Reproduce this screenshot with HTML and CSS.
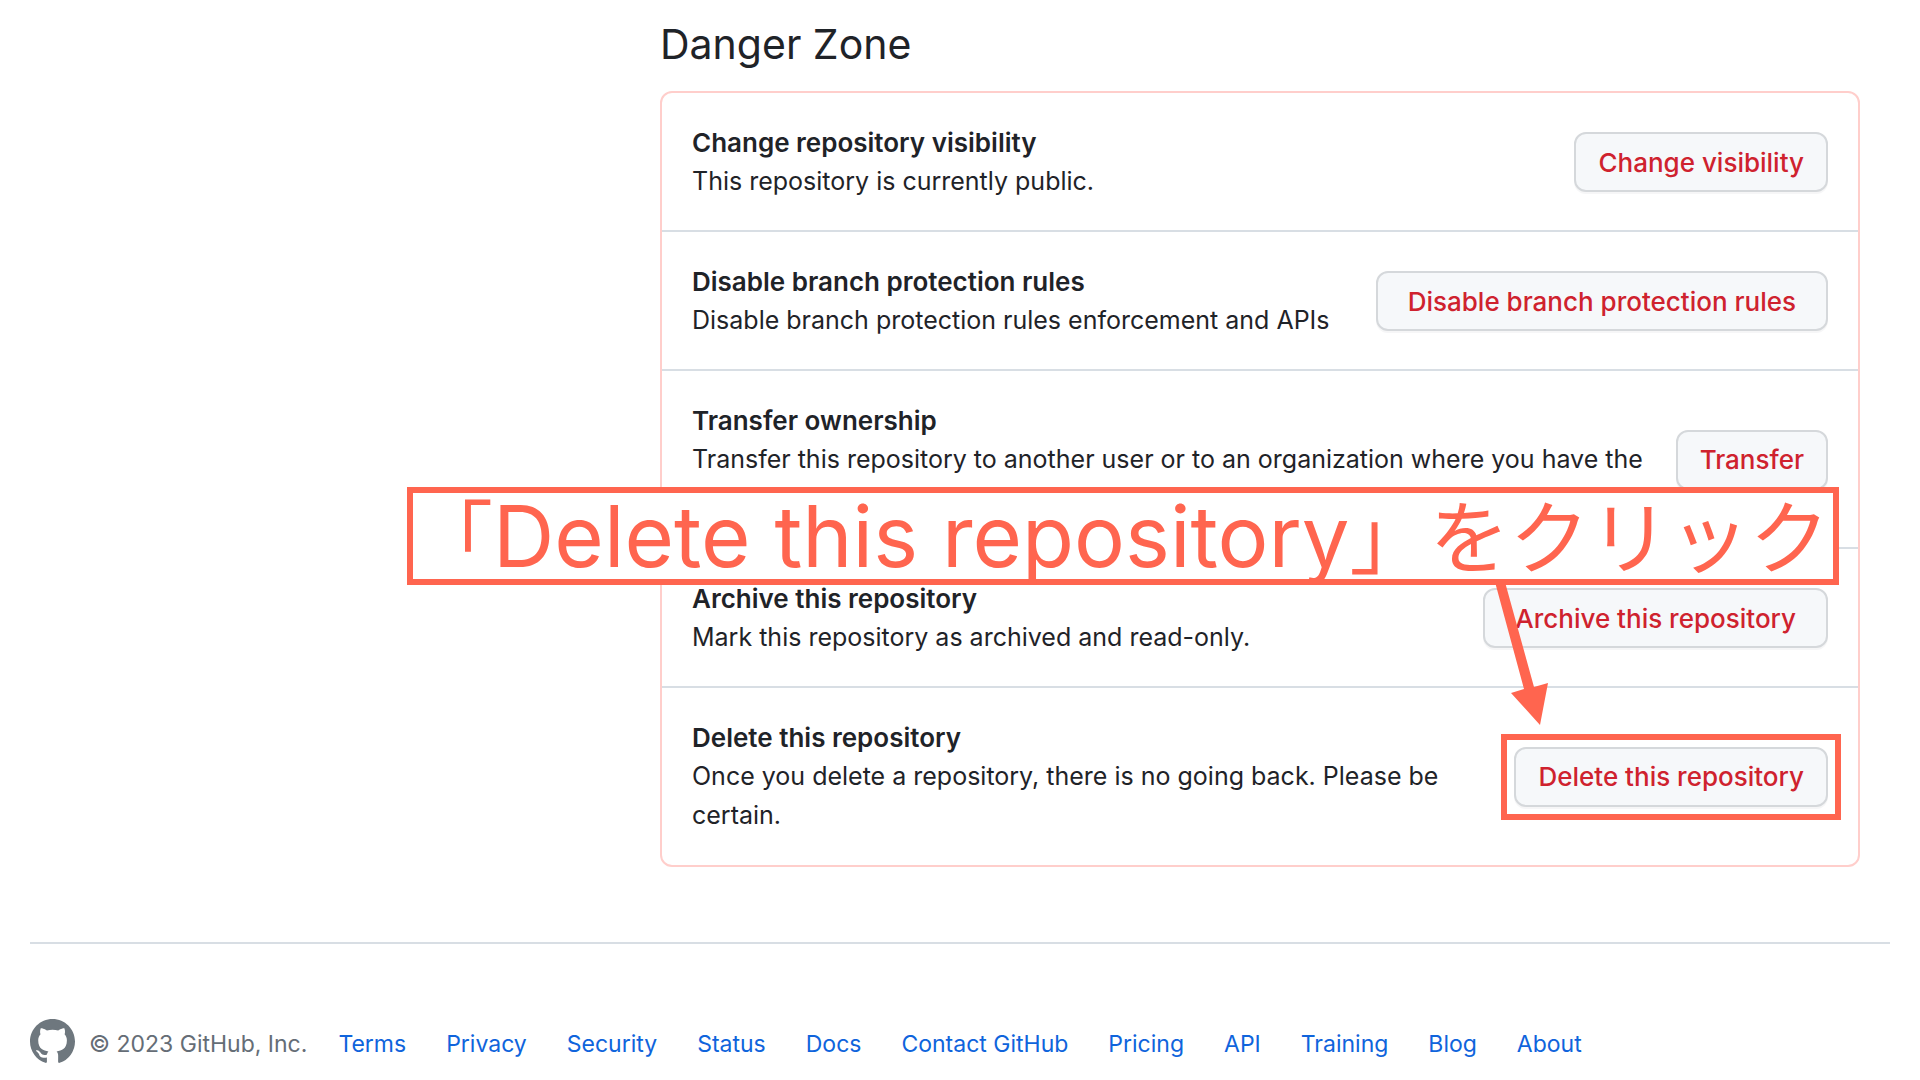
FILE: index.html
```html
<!DOCTYPE html>
<html lang="en">
<head>
<meta charset="utf-8">
<title>Danger Zone</title>
<link rel="stylesheet" href="styles.css">
</head>
<body>
<main class="settings">
  <h2 class="settings-title">Danger Zone</h2>
  <div class="danger-box">
    <ul class="danger-list">
      <li class="danger-row">
        <div class="danger-text">
          <strong>Change repository visibility</strong>
          <p>This repository is currently public.</p>
        </div>
        <button class="btn" type="button">Change visibility</button>
      </li>
      <li class="danger-row">
        <div class="danger-text">
          <strong>Disable branch protection rules</strong>
          <p>Disable branch protection rules enforcement and APIs</p>
        </div>
        <button class="btn btn-wide" type="button">Disable branch protection rules</button>
      </li>
      <li class="danger-row">
        <div class="danger-text">
          <strong>Transfer ownership</strong>
          <p>Transfer this repository to another user or to an organization where you have the ability to create repositories.</p>
        </div>
        <button class="btn" type="button">Transfer</button>
      </li>
      <li class="danger-row">
        <div class="danger-text">
          <strong>Archive this repository</strong>
          <p>Mark this repository as archived and read-only.</p>
        </div>
        <button class="btn btn-wide" type="button">Archive this repository</button>
      </li>
      <li class="danger-row danger-row-spaced">
        <div class="danger-text">
          <strong>Delete this repository</strong>
          <p>Once you delete a repository, there is no going back. Please be certain.</p>
        </div>
        <div class="highlight"><button class="btn" type="button">Delete this repository</button></div>
      </li>
    </ul>
    <svg class="arrow" viewBox="0 0 54 144" aria-hidden="true"><path d="M0 0L10 0L39 105L53 101L45 143L16 111L29 107Z"/></svg>
    <div class="callout" lang="ja">「<span class="callout-latin">Delete this repository</span>」をクリック</div>
  </div>
</main>
<footer class="footer">
  <svg class="mark" viewBox="0 0 16 16" aria-hidden="true"><path d="M8 0C3.58 0 0 3.58 0 8c0 3.54 2.29 6.53 5.47 7.59.4.07.55-.17.55-.38 0-.19-.01-.82-.01-1.49-2.01.37-2.53-.49-2.69-.94-.09-.23-.48-.94-.82-1.13-.28-.15-.68-.52-.01-.53.63-.01 1.08.58 1.23.82.72 1.21 1.87.87 2.33.66.07-.52.28-.87.51-1.07-1.78-.2-3.64-.89-3.64-3.95 0-.87.31-1.59.82-2.15-.08-.2-.36-1.02.08-2.12 0 0 .67-.21 2.2.82.64-.18 1.32-.27 2-.27.68 0 1.36.09 2 .27 1.53-1.04 2.2-.82 2.2-.82.44 1.1.16 1.92.08 2.12.51.56.82 1.27.82 2.15 0 3.07-1.87 3.75-3.65 3.95.29.25.54.73.54 1.48 0 1.07-.01 1.93-.01 2.2 0 .21.15.46.55.38A8.013 8.013 0 0016 8c0-4.42-3.58-8-8-8z"/></svg>
  <span class="copyright">© 2023 GitHub, Inc.</span>
  <nav class="footer-links">
    <a href="#">Terms</a>
    <a href="#">Privacy</a>
    <a href="#">Security</a>
    <a href="#">Status</a>
    <a href="#">Docs</a>
    <a href="#">Contact GitHub</a>
    <a href="#">Pricing</a>
    <a href="#">API</a>
    <a href="#">Training</a>
    <a href="#">Blog</a>
    <a href="#">About</a>
  </nav>
</footer>
</body>
</html>
```
FILE: styles.css
```css
* { box-sizing: border-box; }

body {
  margin: 0;
  background: #fff;
  color: #1f2328;
  font: 26px/39px Inter, "Liberation Sans", sans-serif;
}

.settings { padding: 14px 60px 0 660px; }

.settings-title {
  margin: 0 0 17px;
  font-size: 41px;
  font-weight: 400;
  line-height: 60px;
}

.danger-box {
  position: relative;
  border: 2px solid #ffcecb;
  border-radius: 12px;
}

.danger-list { margin: 0; padding: 0; list-style: none; }

.danger-row {
  display: flex;
  align-items: center;
  justify-content: space-between;
  gap: 12px;
  padding: 30px 30px 29px;
}

.danger-row + .danger-row { border-top: 2px solid #d8dee4; }
.danger-row-spaced { gap: 40px; padding-bottom: 30px; }
.danger-text strong { font-weight: 600; }
.danger-text p { margin: 0; font-size: 25px; }

.btn {
  flex: none;
  height: 60px;
  padding: 0 22px;
  border: 2px solid #d5d8db;
  border-radius: 12px;
  background: #f6f8fa;
  box-shadow: 0 2px 0 rgba(31, 35, 40, 0.04);
  color: #cf222e;
  font: 500 26px/39px Inter, "Liberation Sans", sans-serif;
  white-space: nowrap;
}

.btn-wide { padding: 0 30px; }

.highlight { position: relative; display: flex; flex: none; }

.highlight::after {
  content: "";
  position: absolute;
  inset: -13px;
  border: 6px solid #ff654f;
}

.callout {
  position: absolute;
  top: 394px;
  right: 19px;
  left: -255px;
  height: 98px;
  padding-right: 4px;
  border: 6px solid #ff654f;
  background: #fff;
  color: #ff654f;
  font: 80px/78px "Noto Sans CJK JP", sans-serif;
  text-align: center;
  white-space: nowrap;
}

.callout-latin { font-family: Inter, "Liberation Sans", sans-serif; font-size: 85px; }

.arrow {
  position: absolute;
  top: 489px;
  right: 309px;
  width: 54px;
  height: 144px;
  fill: #ff654f;
}

.footer {
  display: flex;
  align-items: flex-end;
  margin: 75px 30px 0;
  padding: 75px 0 14px;
  border-top: 2px solid #d8dee4;
  font-size: 23px;
}

.mark { flex: none; width: 45px; height: 45px; margin-right: 14px; fill: #6e777e; }
.copyright { margin-right: 31px; color: #656d76; white-space: nowrap; }
.footer-links { display: flex; gap: 40px; white-space: nowrap; }
.footer-links a { color: #0f64dc; text-decoration: none; }
```
